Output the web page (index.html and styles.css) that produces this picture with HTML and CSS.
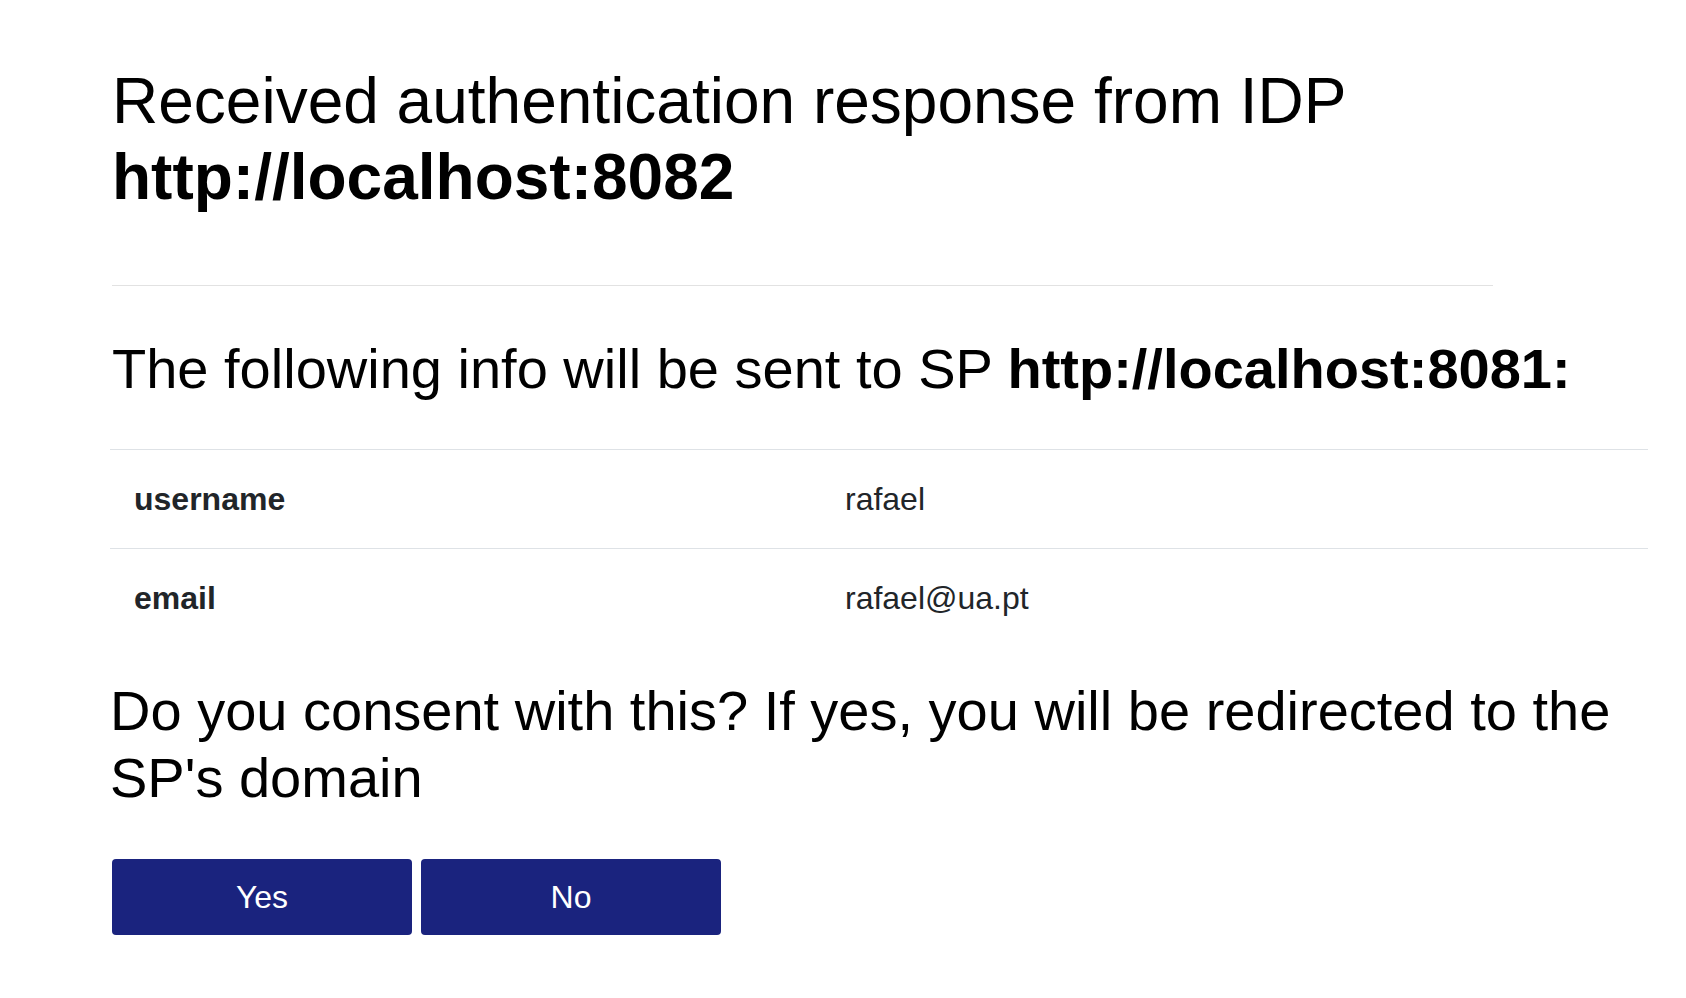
FILE: index.html
```html
<!DOCTYPE html>
<html lang="en">
<head>
<meta charset="utf-8">
<title>Consent</title>
<link rel="stylesheet" href="styles.css">
</head>
<body>
<main class="page">
  <h2 class="title">Received authentication response from IDP <b>http://localhost:8082</b></h2>
  <hr class="divider">
  <h3 class="sp">The following info will be sent to SP <b>http://localhost:8081:</b></h3>
  <table class="info">
    <tbody>
      <tr><th>username</th><td>rafael</td></tr>
      <tr><th>email</th><td>rafael@ua.pt</td></tr>
    </tbody>
  </table>
  <h3 class="question">Do you consent with this? If yes, you will be redirected to the SP's domain</h3>
  <div class="actions">
    <button class="btn" type="button">Yes</button>
    <button class="btn" type="button">No</button>
  </div>
</main>
</body>
</html>
```
FILE: styles.css
```css
html, body {
  margin: 0;
  padding: 0;
  background: #fff;
}
body {
  font-family: "Liberation Sans", Arial, sans-serif;
  color: #000;
}
.page {
  padding: 62.5px 38px 0 110px;
}
.title {
  margin: 0 0 0 2px;
  font-size: 64px;
  line-height: 1.2;
  font-weight: 400;
  width: 1381px;
}
.title b {
  font-weight: 700;
}
.divider {
  margin: 69px 155px 0 2px;
  height: 0;
  border: 0;
  border-top: 1px solid #e2e2e2;
}
.sp {
  margin: 49px 0 0 2px;
  font-size: 56px;
  line-height: 1.2;
  font-weight: 400;
}
.sp b {
  font-weight: 700;
}
.info {
  margin-top: 47px;
  width: 100%;
  border-collapse: collapse;
  color: #212529;
  font-size: 32px;
  line-height: 1.5;
}
.info th,
.info td {
  padding: 25px 24px;
  border-top: 1px solid #dee2e6;
  text-align: left;
  vertical-align: top;
}
.info th {
  font-weight: 700;
}
.info td {
  font-weight: 400;
}
.question {
  margin: 30px 0 0 0;
  font-size: 56px;
  line-height: 1.2;
  font-weight: 400;
}
.actions {
  display: flex;
  gap: 9px;
  margin: 47.5px 0 0 2px;
}
.btn {
  width: 300px;
  height: 76px;
  border: 0;
  border-radius: 4px;
  background: #1a237e;
  color: #fff;
  font-family: "Liberation Sans", Arial, sans-serif;
  font-size: 32px;
  padding: 0;
}
```
